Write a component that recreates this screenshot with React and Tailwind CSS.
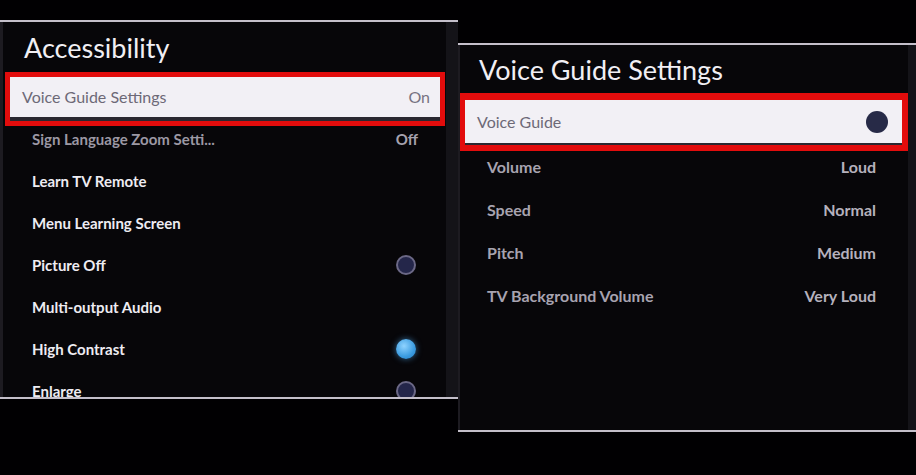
import React from "react";

const font = { fontFamily: "Lato, 'Open Sans', 'Noto Sans', sans-serif" };

function Radio({ kind }) {
  if (kind === "on") {
    return (
      <span className="mr-[2px] block h-[20px] w-[20px] shrink-0 rounded-full bg-[radial-gradient(circle_at_40%_35%,#8fd3ff,#3a9be0_60%,#2a7cc0)] shadow-[0_0_6px_rgba(80,170,240,0.6)]" />
    );
  }
  return (
    <span className="mr-[2px] block h-[20px] w-[20px] shrink-0 rounded-full border-2 border-[#6b6886] bg-[#24264a]" />
  );
}

const leftRows = [
  { label: "Sign Language Zoom Setti...", value: "Off", dim: true },
  { label: "Learn TV Remote" },
  { label: "Menu Learning Screen" },
  { label: "Picture Off", radio: "off" },
  { label: "Multi-output Audio" },
  { label: "High Contrast", radio: "on" },
  { label: "Enlarge", radio: "off" },
];

const rightRows = [
  ["Volume", "Loud"],
  ["Speed", "Normal"],
  ["Pitch", "Medium"],
  ["TV Background Volume", "Very Loud"],
];

export default function App() {
  return (
    <div className="flex h-[475px] w-[916px] overflow-hidden bg-[#010002]" style={font}>
      {/* Left panel */}
      <div className="flex w-[458px] shrink-0 flex-col pt-[20px]">
        <div className="h-[2px] shrink-0 bg-[#c4bfca]" />
        <div className="flex h-[375px] shrink-0">
          <div className="w-[3px] bg-[#1d1b21]" />
          <div className="flex flex-1 flex-col overflow-hidden bg-[#070609]">
            <div className="flex h-[50px] shrink-0 items-center pl-[21px] text-[27px] leading-none text-[#f1eff4]">
              Accessibility
            </div>
            <div className="ml-[2px] mr-[1px] shrink-0 border-[5px] border-[#e20c0c]">
              <div className="flex h-[44px] items-center justify-between border-b-[4px] border-[#2a2830] bg-[#f2f0f5] pl-[12px] pr-[10px] text-[16px] text-[#6d6977]">
                <span>Voice Guide Settings</span>
                <span className="text-[#777381]">On</span>
              </div>
            </div>
            <div className="mt-[-8px] flex shrink-0 flex-col">
              {leftRows.map((r) => (
                <div
                  key={r.label}
                  className="flex h-[42px] shrink-0 items-center justify-between pl-[29px] pr-[28px] text-[15px] font-bold"
                >
                  <span className={r.dim ? "text-[#9c98a4]" : "text-[#eeecf2]"}>{r.label}</span>
                  {r.value && <span className="text-[#a6a2ae]">{r.value}</span>}
                  {r.radio && <Radio kind={r.radio} />}
                </div>
              ))}
            </div>
          </div>
          <div className="w-[12px] bg-[#141318]" />
        </div>
        <div className="h-[2px] shrink-0 bg-[#c4bfca]" />
      </div>

      {/* Right panel */}
      <div className="flex flex-1 flex-col pt-[43px]">
        <div className="h-[2px] shrink-0 bg-[#c4bfca]" />
        <div className="flex h-[385px] shrink-0">
          <div className="w-[2px] bg-[#1d1b21]" />
          <div className="relative flex flex-1 flex-col overflow-hidden bg-[#070609]">
            <div className="flex h-[48px] shrink-0 items-center pl-[19px] text-[27px] leading-none text-[#f1eff4]">
              Voice Guide Settings
            </div>
            <div className="relative ml-[-1px] shrink-0 border-[6px] border-t-[7px] border-[#e20c0c]">
              <div className="flex h-[45px] items-center justify-between border-b-[2px] border-[#2a2830] bg-[#f2f0f5] pl-[12px] pr-[14px] text-[16px] text-[#6d6977]">
                <span>Voice Guide</span>
                <span className="block h-[22px] w-[22px] rounded-full bg-[#272a47]" />
              </div>
            </div>
            <div className="mt-[-6px] flex shrink-0 flex-col">
              {rightRows.map(([l, v]) => (
                <div
                  key={l}
                  className="flex h-[43px] shrink-0 items-center justify-between pl-[27px] pr-[32px] text-[16px] font-bold"
                >
                  <span className="text-[#a7a3b0]">{l}</span>
                  <span className="text-[#b5b1bd]">{v}</span>
                </div>
              ))}
            </div>
          </div>
          <div className="w-[8px] bg-[#141318]" />
        </div>
        <div className="h-[2px] shrink-0 bg-[#c4bfca]" />
      </div>
    </div>
  );
}
